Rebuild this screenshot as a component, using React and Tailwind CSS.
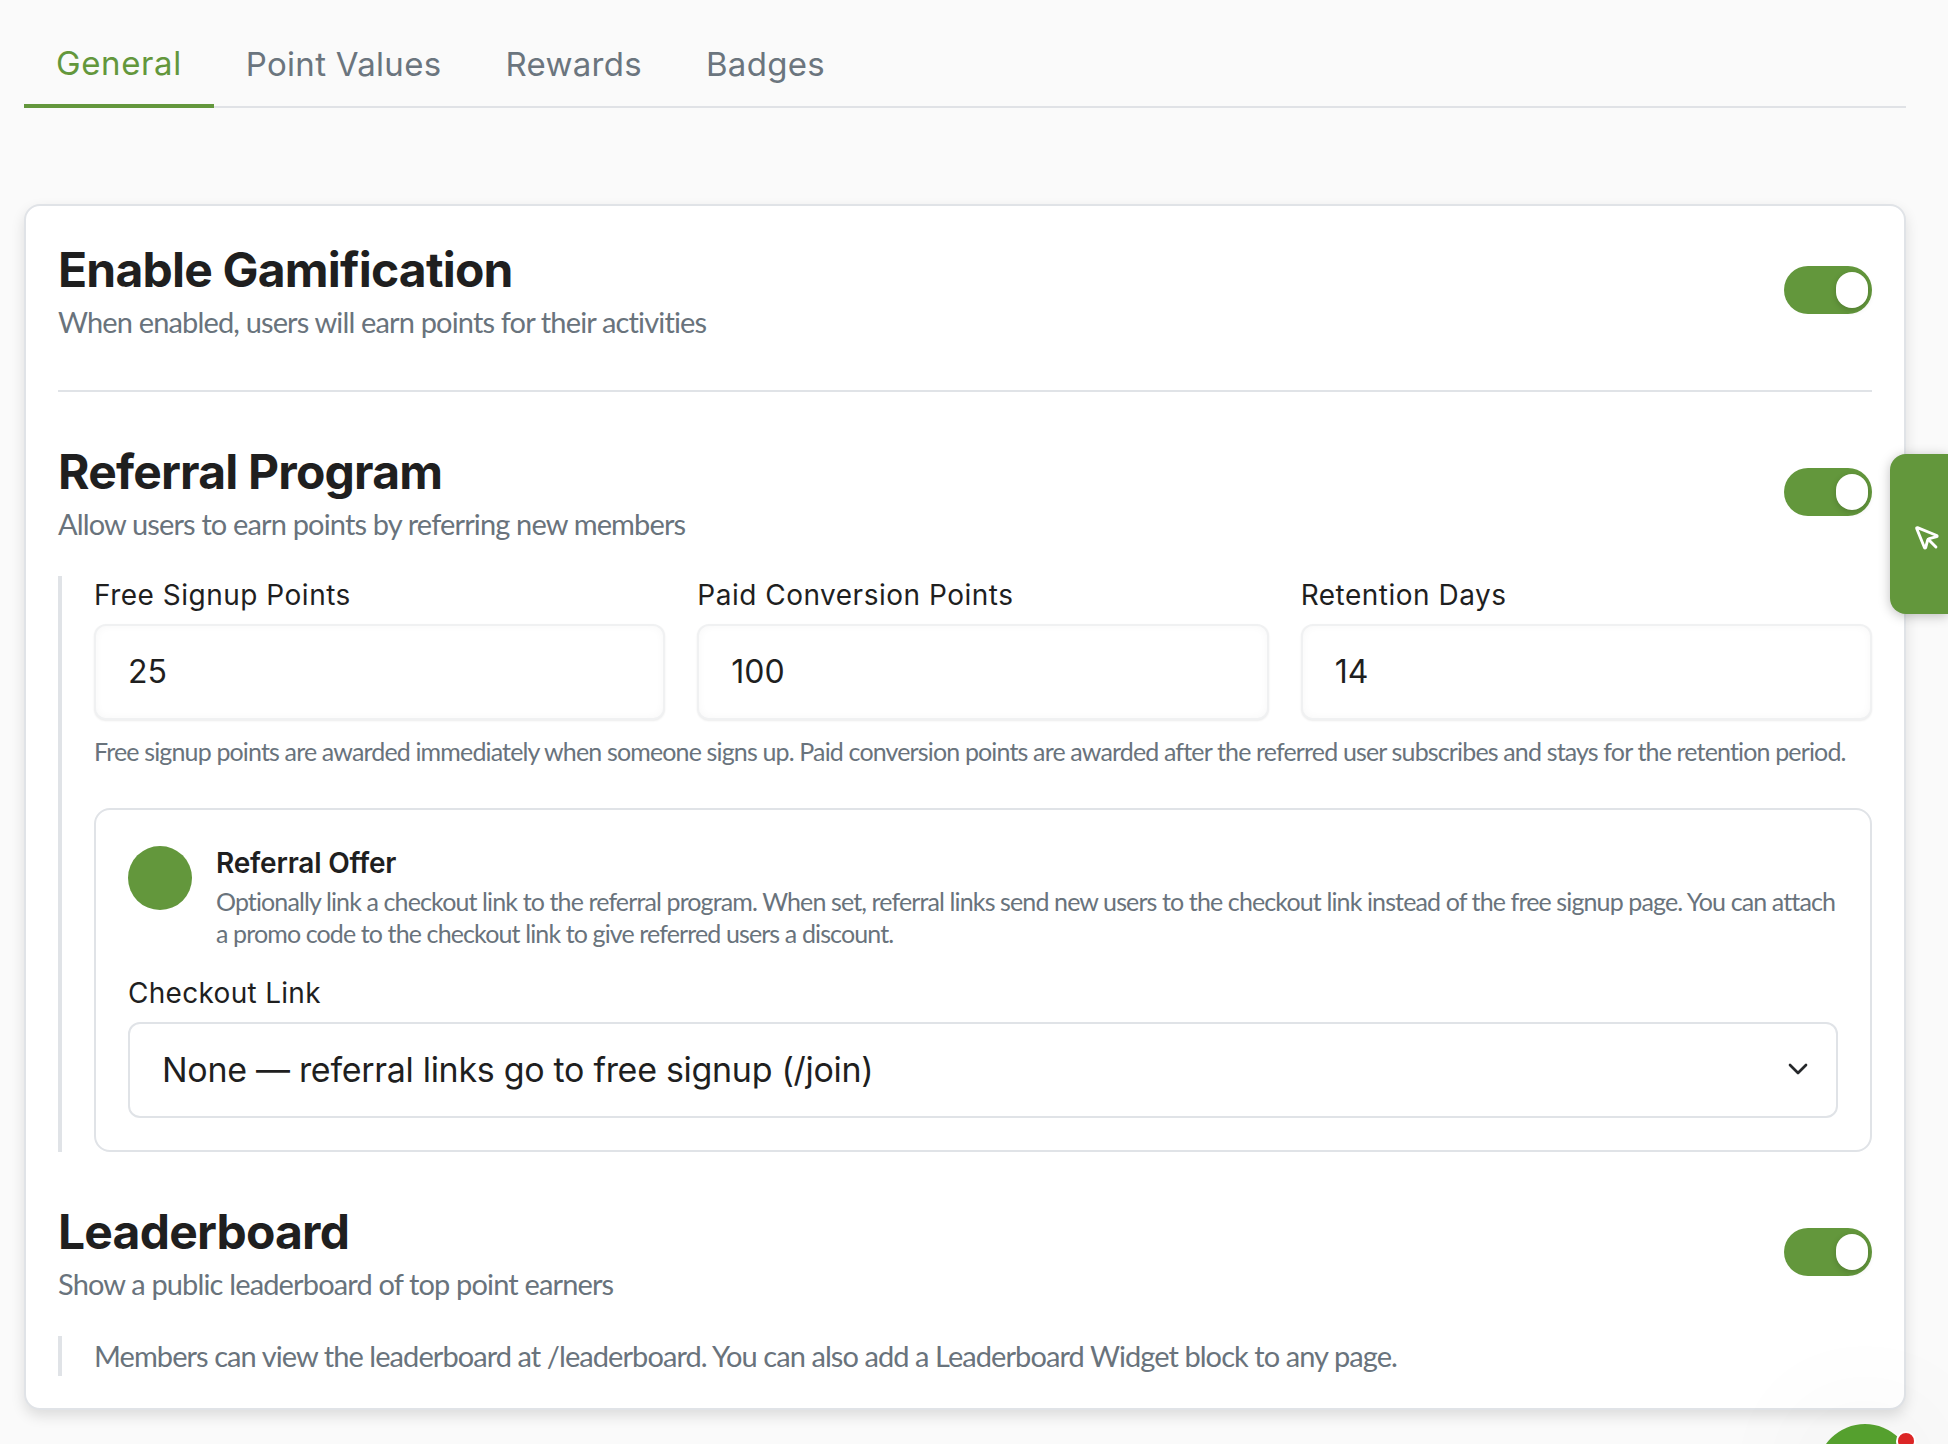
import React from "react";
import { ChevronDown, MousePointer } from "lucide-react";

const tabs = ["General", "Point Values", "Rewards", "Badges"];

function Toggle() {
  return (
    <div className="mt-[26px] flex h-12 w-[88px] shrink-0 items-center justify-end rounded-full bg-[#63973c] pr-1">
      <span className="h-9 w-8 rounded-full bg-white shadow-[0_2px_6px_rgba(0,0,0,0.18)]" />
    </div>
  );
}

function Header({ title, text }) {
  return (
    <div className="flex items-start justify-between">
      <div>
        <h2 className="font-[Inter] text-[48px] leading-[60px] font-[650] tracking-[-0.8px] text-[#1f1f1f]">{title}</h2>
        <p className="mt-[2px] font-[Lato] text-[29px] leading-10 tracking-[-0.85px] text-[#69737c]">{text}</p>
      </div>
      <Toggle />
    </div>
  );
}

function Field({ label, value }) {
  return (
    <div className="pt-[1px]">
      <label className="block font-[Inter] text-[28px] leading-9 tracking-[0.5px] text-[#1f1f1f]">{label}</label>
      <input
        readOnly
        defaultValue={value}
        className="mt-[11px] block h-24 w-full rounded-xl border-2 border-[#f0f1f2] bg-white px-8 pb-[2px] font-[Inter] text-[32px] text-[#1f1f1f] shadow-[inset_0_0_8px_rgba(0,0,0,0.035),0_1px_2px_rgba(0,0,0,0.08)] outline-none"
      />
    </div>
  );
}

export default function App() {
  return (
    <div className="relative h-[1444px] w-full overflow-hidden bg-[#fafafa] pr-[42px] pl-6">
      <nav className="flex h-[108px] border-b-2 border-[#e0e2e6]">
        {tabs.map((t, i) => (
          <div
            key={t}
            className={
              i === 0
                ? "-mb-[2px] flex h-[108px] items-center border-b-4 border-[#63973c] px-8 pt-6 font-[Inter] text-[33px] tracking-[0.6px] text-[#63973c]"
                : "flex h-[106px] items-center px-8 pt-6 font-[Inter] text-[33px] tracking-[0.3px] text-[#6b757e]"
            }
          >
            {t}
          </div>
        ))}
      </nav>

      <main className="mt-24 h-[1206px] rounded-2xl border-2 border-[#e0e3e7] bg-white px-8 pt-[34px] shadow-[0_6px_14px_rgba(0,0,0,0.12)]">
        <Header title="Enable Gamification" text="When enabled, users will earn points for their activities" />
        <hr className="mt-[48px] h-[2px] border-0 bg-[#e0e3e7]" />

        <section className="mt-[50px]">
          <Header title="Referral Program" text="Allow users to earn points by referring new members" />
          <div className="mt-[32px] border-l-4 border-[#e0e3e7] pl-8">
            <div className="grid grid-cols-3 gap-8">
              <Field label="Free Signup Points" value="25" />
              <Field label="Paid Conversion Points" value="100" />
              <Field label="Retention Days" value="14" />
            </div>
            <p className="mt-[15px] font-[Lato] text-[25px] leading-8 tracking-[-0.85px] whitespace-nowrap text-[#69737c]">
              Free signup points are awarded immediately when someone signs up. Paid conversion points are awarded after the referred user subscribes and stays for the retention period.
            </p>

            <div className="mt-[41px] rounded-2xl border-2 border-[#e0e3e7] bg-white px-8 pt-[35px] pb-8">
              <div className="flex gap-6">
                <div className="mt-[1px] h-16 w-16 shrink-0 rounded-full bg-[#63973c]" />
                <div>
                  <h3 className="font-[Inter] text-[28px] leading-9 font-semibold tracking-[-0.2px] text-[#1f1f1f]">Referral Offer</h3>
                  <p className="mt-[4px] font-[Lato] text-[25px] leading-8 tracking-[-0.88px] text-[#69737c]">
                    Optionally link a checkout link to the referral program. When set, referral links send new users to the checkout link instead of the free signup page. You can attach a promo code to the checkout link to give referred users a discount.
                  </p>
                </div>
              </div>
              <label className="mt-[26px] block font-[Inter] text-[28px] leading-9 tracking-[0.3px] text-[#1f1f1f]">Checkout Link</label>
              <div className="mt-[11px] flex h-24 items-center justify-between rounded-xl border-2 border-[#e0e3e7] bg-white pr-[22px] pb-[2px] pl-8">
                <span className="font-[Inter] text-[34px] tracking-[-0.3px] text-[#1f1f1f]">None — referral links go to free signup (/join)</span>
                <ChevronDown className="h-8 w-8 text-[#26282b]" strokeWidth={2} />
              </div>
            </div>
          </div>
        </section>

        <section className="mt-[50px]">
          <Header title="Leaderboard" text="Show a public leaderboard of top point earners" />
          <div className="mt-[32px] flex h-10 items-center border-l-4 border-[#e0e3e7] pl-8">
            <p className="font-[Lato] text-[29px] tracking-[-0.93px] whitespace-nowrap text-[#69737c]">
              Members can view the leaderboard at /leaderboard. You can also add a Leaderboard Widget block to any page.
            </p>
          </div>
        </section>
      </main>

      <div className="absolute top-[454px] right-0 flex h-40 w-[58px] items-center justify-center rounded-l-2xl bg-[#63973c] pt-2 pl-4 shadow-[0_2px_12px_rgba(0,0,0,0.25)]">
        <MousePointer className="h-[29px] w-[29px] text-white" strokeWidth={2.4} />
      </div>

      <div className="absolute top-[1424px] left-[1817px] h-24 w-24 rounded-full bg-[#55a02e] shadow-[0_0_130px_rgba(0,0,0,0.08)]" />
      <div className="absolute top-[1431px] left-[1896px] h-5 w-5 rounded-full border-2 border-white bg-[#dc2626]" />
    </div>
  );
}
